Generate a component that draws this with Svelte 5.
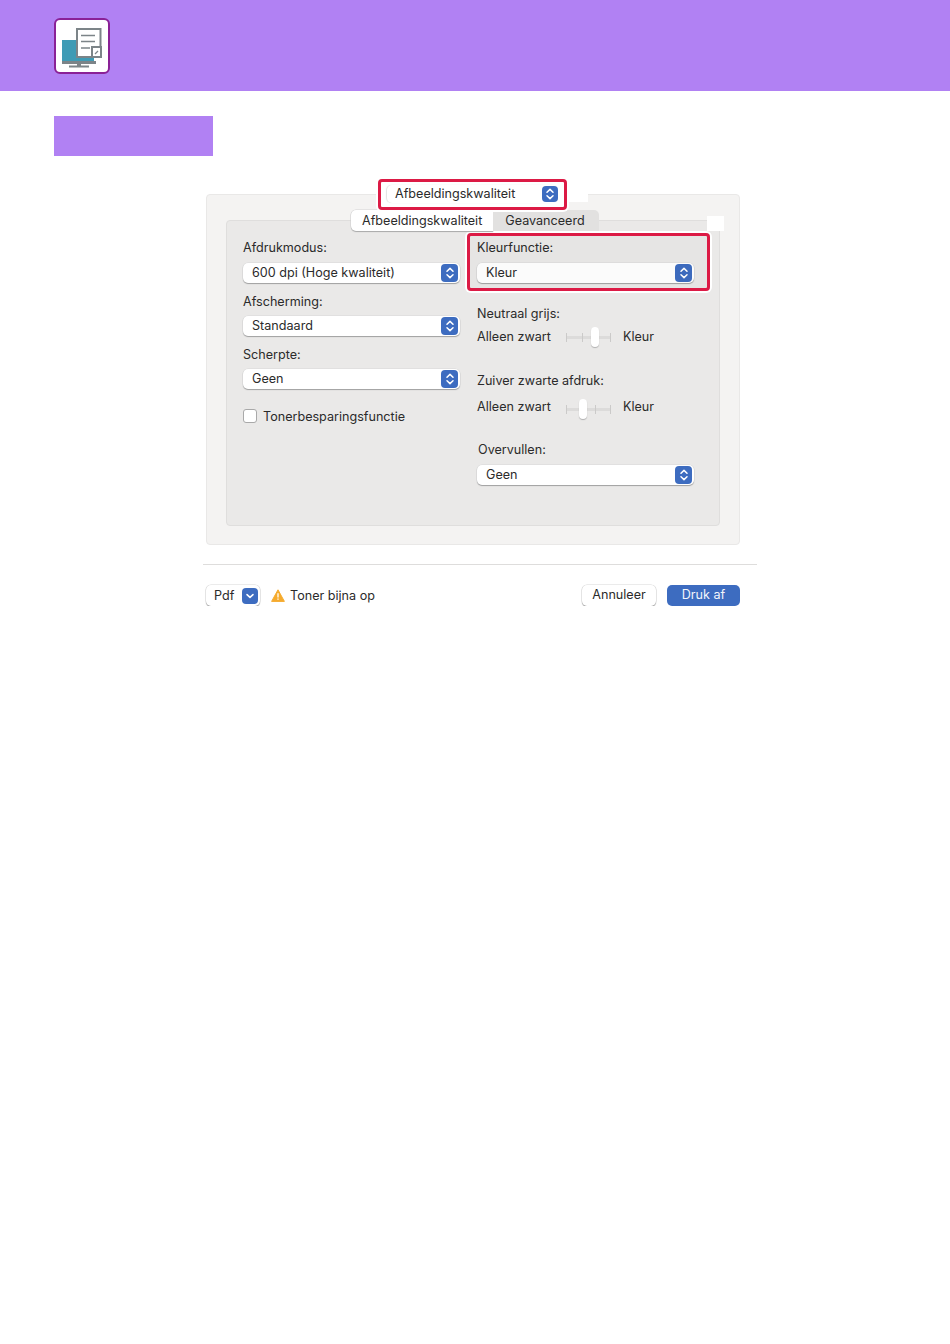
<script>
  const leftFields = [
    { label: 'Afdrukmodus:', value: '600 dpi (Hoge kwaliteit)' },
    { label: 'Afscherming:', value: 'Standaard' },
    { label: 'Scherpte:', value: 'Geen' }
  ];
</script>

{#snippet select(value, cls = '')}
  <div class="select {cls}">
    <span class="value">{value}</span>
    <span class="stepper">
      <svg width="10" height="14" viewBox="0 0 10 14" fill="none" stroke="#fff" stroke-width="1.5" stroke-linecap="round" stroke-linejoin="round">
        <path d="M2 5.2 5 2.4 8 5.2" />
        <path d="M2 8.8 5 11.6 8 8.8" />
      </svg>
    </span>
  </div>
{/snippet}

{#snippet slider(pos)}
  <div class="slider-row">
    <span class="end-a">Alleen zwart</span>
    <div class="slider">
      <i class="tick" style="left: 0"></i>
      <i class="tick" style="left: 16px"></i>
      <i class="tick" style="left: 29px"></i>
      <i class="tick" style="left: 44px"></i>
      <b class="thumb" style="left: {pos}px"></b>
    </div>
    <span>Kleur</span>
  </div>
{/snippet}

<header class="banner">
  <div class="app-icon">
    <svg width="52" height="52" viewBox="56 20 52 52">
      <rect x="62" y="40" width="32" height="21" fill="#3f9bb5" />
      <rect x="62" y="61" width="34" height="3" fill="#7c8488" />
      <rect x="77" y="64" width="4" height="3" fill="#7c8488" />
      <rect x="69" y="65.5" width="20" height="2" fill="#7c8488" />
      <rect x="77" y="29" width="23.5" height="28" fill="#fff" stroke="#7c8488" stroke-width="2" />
      <path d="M81 35.5h14M81 41.5h14M81 48h9" stroke="#7c8488" stroke-width="1.4" />
      <rect x="92" y="47" width="9" height="10" fill="#fff" stroke="#7c8488" stroke-width="2" />
      <path d="M95 54l3-3" stroke="#7c8488" stroke-width="1.2" />
    </svg>
  </div>
</header>

<div class="section-bar"></div>

<main class="sheet">
  <section class="outer">
    <div class="top-select">
      {@render select('Afbeeldingskwaliteit', 'plain')}
    </div>
    <div class="patch patch-a"></div>
    <div class="patch patch-b"></div>

    <div class="tabs">
      <span class="tab active">Afbeeldingskwaliteit</span>
      <span class="tab">Geavanceerd</span>
    </div>

    <div class="inner">
      <div class="col">
        {#each leftFields as f}
          <div class="field">
            <label>{f.label}</label>
            {@render select(f.value)}
          </div>
        {/each}
        <div class="check">
          <span class="box"></span>
          <span>Tonerbesparingsfunctie</span>
        </div>
      </div>

      <div class="col">
        <div class="field hl">
          <label>Kleurfunctie:</label>
          {@render select('Kleur')}
        </div>
        <div class="group first">
          <label>Neutraal grijs:</label>
          {@render slider(25)}
        </div>
        <div class="group second">
          <label>Zuiver zwarte afdruk:</label>
          {@render slider(13)}
        </div>
        <div class="field third">
          <label>Overvullen:</label>
          {@render select('Geen')}
        </div>
      </div>
    </div>
  </section>

  <div class="rule"></div>

  <footer class="actions">
    <div class="pdf">
      <span class="value">Pdf</span>
      <span class="stepper small">
        <svg width="10" height="8" viewBox="0 0 10 8" fill="none" stroke="#fff" stroke-width="1.5" stroke-linecap="round" stroke-linejoin="round">
          <path d="M2 2.6 5 5.4 8 2.6" />
        </svg>
      </span>
    </div>
    <svg class="warn" width="14" height="13" viewBox="0 0 14 13">
      <path d="M7 .8 13.4 12.4H.6Z" fill="#f5ab2e" stroke="#f5ab2e" stroke-linejoin="round" />
      <path d="M7 4.2v4.2M7 9.6v1.2" stroke="#fff" stroke-width="1.3" />
    </svg>
    <span class="warn-text">Toner bijna op</span>
    <button class="btn cancel">Annuleer</button>
    <button class="btn print">Druk af</button>
  </footer>
</main>

<style>
  :global(body) {
    margin: 0;
    background: #fff;
    font-family: Inter, "Liberation Sans", sans-serif;
    font-size: 12.6px;
    color: #2b2b2b;
  }
  .banner {
    height: 91px;
    background: #b181f3;
    padding: 18px 0 0 54px;
    box-sizing: border-box;
  }
  .app-icon {
    width: 56px;
    height: 56px;
    box-sizing: border-box;
    background: #fff;
    border: 2px solid #8a2196;
    border-radius: 6px;
  }
  .app-icon svg {
    display: block;
  }
  .section-bar {
    width: 159px;
    height: 40px;
    margin: 25px 0 0 54px;
    background: #b181f3;
  }
  .sheet {
    margin: 38px 0 0 206px;
    width: 551px;
  }
  .outer {
    position: relative;
    width: 534px;
    height: 351px;
    box-sizing: border-box;
    padding: 25px 19px 0;
    background: #f4f3f2;
    border: 1px solid #e9e8e7;
    border-radius: 4px;
  }
  .top-select {
    position: absolute;
    left: 171px;
    top: -16px;
    width: 189px;
    height: 31px;
    box-sizing: border-box;
    padding: 3px 6px 0 6px;
    background: #fff;
    border: 3px solid #dc1a45;
    border-radius: 4px;
    box-shadow: 0 0 0 2px #fff;
    z-index: 3;
  }
  .top-select .select {
    height: 18px;
    padding: 0 0 0 8px;
    box-shadow: -1px 0 1px #e2e2e2;
  }
  .top-select .stepper {
    width: 16px;
    height: 16px;
  }
  .patch {
    position: absolute;
    background: #fff;
  }
  .patch-a {
    left: 360px;
    top: -4px;
    width: 21px;
    height: 11px;
  }
  .patch-b {
    left: 500px;
    top: 21px;
    width: 17px;
    height: 15px;
  }
  .tabs {
    position: absolute;
    left: 144px;
    top: 15px;
    display: flex;
    z-index: 2;
  }
  .tab {
    height: 21px;
    line-height: 21px;
    padding: 0 14px 0 12px;
    background: #e2e1e0;
    border-radius: 0 5px 0 0;
  }
  .tab.active {
    background: #fff;
    border-radius: 5px 0 0 5px;
    padding: 0 11px 0 11px;
    box-shadow: 0 1px 1px #a9a9a9, 0 0 0 0.5px #d4d4d4;
  }
  .inner {
    height: 306px;
    box-sizing: border-box;
    padding: 0 25px 0 16px;
    background: #eae9e8;
    border: 1px solid #dfdedd;
    border-radius: 4px;
    display: grid;
    grid-template-columns: 217px 217px;
    column-gap: 17px;
  }
  .col {
    padding-top: 17px;
  }
  label {
    display: block;
    height: 19px;
    line-height: 19px;
  }
  .field {
    margin-bottom: 9px;
  }
  .field label {
    margin-bottom: 6px;
  }
  .col:first-child .field + .field label {
    margin-bottom: 5px;
  }
  .select {
    height: 20px;
    box-sizing: border-box;
    padding: 0 2px 0 9px;
    background: #fff;
    border-radius: 5px;
    box-shadow: 0 1px 1px #a0a0a0, 0 0 0 0.5px #d8d8d8;
    display: flex;
    align-items: center;
    justify-content: space-between;
  }
  .value {
    margin-bottom: 1px;
  }
  .stepper {
    width: 17px;
    height: 18px;
    background: #3d6cc0;
    border-radius: 4px;
    display: flex;
    align-items: center;
    justify-content: center;
  }
  .stepper.small {
    width: 16px;
    height: 16px;
  }
  .check {
    margin-top: 20px;
    display: flex;
    align-items: center;
    gap: 6px;
    height: 14px;
  }
  .box {
    width: 14px;
    height: 14px;
    box-sizing: border-box;
    background: #fff;
    border: 1px solid #a9a9a9;
    border-radius: 3px;
  }
  .hl {
    position: relative;
    z-index: 1;
    margin-bottom: 0;
  }
  .hl::before {
    content: "";
    position: absolute;
    left: -10px;
    top: -5px;
    width: 243px;
    height: 58px;
    box-sizing: border-box;
    background: rgba(0, 0, 0, 0.015);
    border: 3px solid #dc1a45;
    border-radius: 4px;
    box-shadow: 0 0 0 2px #fff;
    pointer-events: none;
  }
  .group.first {
    margin-top: 21px;
  }
  .group.first .slider-row {
    margin-top: 4px;
  }
  .group.second {
    margin-top: 25px;
  }
  .group.second .slider-row {
    margin-top: 7px;
  }
  .group.second .slider {
    top: 3px;
  }
  .field.third {
    margin-top: 24px;
  }
  .field.third label {
    padding-left: 1px;
  }
  .slider-row {
    display: flex;
    align-items: center;
    height: 19px;
  }
  .end-a {
    width: 89px;
  }
  .slider {
    position: relative;
    width: 45px;
    height: 3px;
    margin-right: 12px;
    background: #dcdbda;
    top: 1px;
  }
  .tick {
    position: absolute;
    top: -3px;
    width: 1px;
    height: 9px;
    background: #cbcac9;
  }
  .thumb {
    position: absolute;
    top: -9px;
    width: 8px;
    height: 20px;
    background: #fff;
    border-radius: 4px;
    box-shadow: 0 1px 1px #b0b0b0;
  }
  .rule {
    height: 1px;
    margin: 19px 0 0 -3px;
    background: #dedddc;
  }
  .actions {
    display: flex;
    align-items: center;
    width: 534px;
    height: 21px;
    margin-top: 20px;
  }
  .pdf {
    width: 54px;
    height: 21px;
    box-sizing: border-box;
    padding: 0 2px 0 8px;
    background: #fff;
    border-radius: 5px;
    box-shadow: 0 1px 1px #a0a0a0, 0 0 0 0.5px #d8d8d8;
    display: flex;
    align-items: center;
    justify-content: space-between;
  }
  .warn {
    margin-left: 11px;
  }
  .warn-text {
    margin-left: 5px;
    flex: 1;
  }
  .btn {
    height: 21px;
    padding: 0 0 2px;
    border: none;
    border-radius: 5px;
    font: inherit;
  }
  .cancel {
    width: 74px;
    background: #fff;
    color: #2b2b2b;
    box-shadow: 0 1px 1px #a0a0a0, 0 0 0 0.5px #d8d8d8;
  }
  .print {
    width: 73px;
    margin-left: 11px;
    background: #3d6cc0;
    color: #f2f5fb;
  }
</style>
